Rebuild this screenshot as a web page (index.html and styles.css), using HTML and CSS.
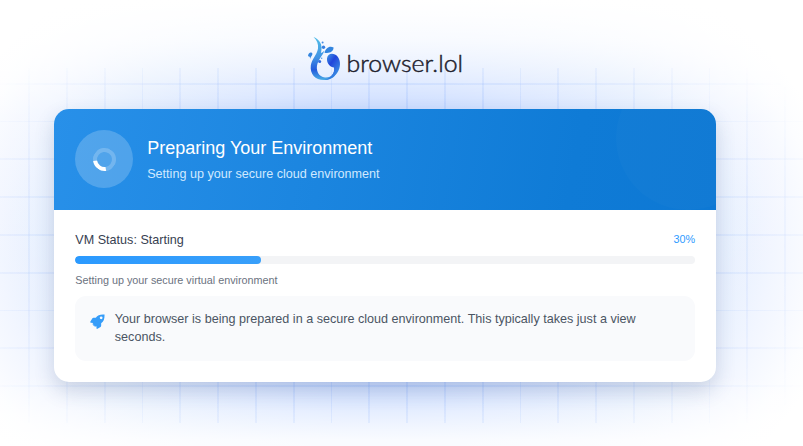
FILE: index.html
```html
<!DOCTYPE html>
<html lang="en">
<head>
<meta charset="utf-8">
<title>browser.lol</title>
<link rel="stylesheet" href="styles.css">
</head>
<body>
<div class="backdrop"></div>
<div class="grid"></div>
<main class="page">
  <svg class="logo" viewBox="0 0 160 48" role="img" aria-label="browser.lol">
    <defs>
      <linearGradient id="water" x1="0" y1="0" x2="0" y2="1">
        <stop offset="0" stop-color="#50bde7"/>
        <stop offset=".48" stop-color="#4293e4"/>
        <stop offset=".76" stop-color="#235bdc"/>
        <stop offset="1" stop-color="#4aaee5"/>
      </linearGradient>
      <linearGradient id="curl" x1="0" y1="0" x2=".8" y2="1">
        <stop offset="0" stop-color="#4aafe6"/>
        <stop offset=".42" stop-color="#2145db"/>
        <stop offset="1" stop-color="#40a1e5"/>
      </linearGradient>
    </defs>
    <path fill="url(#water)" d="M7.500 3C14 5.500 16.500 11 15.300 17c-.6 3 .2 2 3.200-.2-1.500 4-5.500 8-7 12.700-2.200 7 1.300 13.500 7.500 14 6.500.5 10.500-4.500 9.500-11.500 4.500 8-1 14-10.500 14C9 46 3.800 40 4.800 31.500 5.700 25 11 21 12 14.500 12.500 10 11 6 7.500 3Z"/>
    <path fill="url(#curl)" d="M21 24.500c.3-4.300 4.500-5.700 8-3.900 4.800 2.500 6 8.700 4.300 13.900C31 41.500 25.500 45.500 18.500 46c6.200-1.800 10.500-6.500 9.500-12.500-3.500-.2-7.500-4-7-9Z"/>
    <path fill="#3385df" d="M18.500 18.800c1-5.200 5.500-7.600 9.100-5.200-.3 4.400-4.100 6-9.100 5.200Z"/>
    <path fill="#3385df" d="M4.200 25c.2-2.200 2.200-3.600 2.300-5.200C5.300 17.200 2 19 2 22.500c1.300-.6 2 .5 2.200 2.500Z"/>
    <circle cx="16.600" cy="8.500" r="1" fill="#438ce3"/>
    <circle cx="17.500" cy="13.300" r="1.700" fill="#377fe0"/>
    <circle cx="13.700" cy="27.600" r="1.500" fill="#316bdf"/>
    <circle cx="15.700" cy="24.300" r=".7" fill="#4b9de5"/>
    <text class="wordmark" x="40.500" y="37.500" textLength="116.500" lengthAdjust="spacingAndGlyphs">browser.lol</text>
  </svg>
  <section class="card">
    <header class="hero">
      <div class="badge"><div class="spinner"></div></div>
      <div>
        <h1 class="title">Preparing Your Environment</h1>
        <p class="subtitle">Setting up your secure cloud environment</p>
      </div>
    </header>
    <div class="body">
      <div class="status"><span>VM Status: Starting</span><span class="percent">30%</span></div>
      <div class="track"><div class="fill" style="width:30%"></div></div>
      <p class="detail">Setting up your secure virtual environment</p>
      <div class="notice">
        <svg class="rocket" viewBox="0 0 16 16"><path fill-rule="evenodd" d="M15.500.5C11.200.1 8.200 1 6.200 4.100H3.700c-.6 0-1 .2-1.300.7L.3 8.200c-.3.600.1 1 .7 1l2.500.3-1.200 1.500 1.300.2L3.500 12.500l1.300-.1.200 1.300 1.900-.7v2.200c0 .6.600.9 1.100.6l3.200-2c.5-.3.700-.7.700-1.200V9.800c3-2 3.700-5.100 3.600-9.300ZM11.900 2.600a1.500 1.500 0 1 0 0 3 1.500 1.500 0 0 0 0-3Z"/></svg>
        <p class="message">Your browser is being prepared in a secure cloud environment. This typically takes just a view seconds.</p>
      </div>
    </div>
  </section>
</main>
</body>
</html>
```
FILE: styles.css
```css
* { box-sizing: border-box; }
body {
  margin: 0;
  height: 446px;
  overflow: hidden;
  background: #fff;
  font-family: "Liberation Sans", Arial, sans-serif;
}
h1, p { margin: 0; font-weight: 400; }
.backdrop {
  position: absolute;
  inset: 0;
  background:
    linear-gradient(180deg, #fff 0, rgba(255, 255, 255, .8) 40px, rgba(255, 255, 255, .08) 115px, rgba(255, 255, 255, 0) 375px, rgba(255, 255, 255, .85) 440px),
    radial-gradient(ellipse 465px 340px at 385px 246px, #a9c7ff 0%, #bdd3ff 35%, #d2e1ff 52%, #e4eefe 71%, #f2f6ff 83%, #fcfdff 94%, #fff 100%);
}
.grid {
  position: absolute;
  inset: 68px 0 23px;
  background:
    repeating-linear-gradient(90deg, rgba(90, 145, 250, .14) 0 1.800px, transparent 1.800px 37.800px) -9.600px 0 / 850px 100%,
    repeating-linear-gradient(180deg, rgba(90, 145, 250, .14) 0 1.800px, transparent 1.800px 37.800px) 0 -23.100px / 100% 400px;
  -webkit-mask-image: radial-gradient(ellipse 500px 270px at 385px 178px, #000 50%, transparent 100%);
  mask-image: radial-gradient(ellipse 500px 270px at 385px 178px, #000 50%, transparent 100%);
}
.page {
  position: relative;
  width: 662px;
  margin-left: 54px;
  padding-top: 34px;
}
.logo { display: block; width: 160px; height: 48px; margin: 0 0 27px 252px; }
.wordmark {
  font-family: Lato, sans-serif;
  font-size: 23.500px;
  font-weight: 300;
  fill: #20202c;
  stroke: #20202c;
  stroke-width: .450px;
}
.card {
  height: 273px;
  border-radius: 15px;
  overflow: hidden;
  background: #fff;
  box-shadow: 0 9px 20px rgba(45, 65, 110, .18);
}
.hero {
  position: relative;
  display: flex;
  align-items: center;
  gap: 14.200px;
  height: 101px;
  padding: 0 21px 1px;
  overflow: hidden;
  color: #fff;
  background: linear-gradient(100deg, #2890e9 0%, #0f7bd6 78%, #0d78d4 100%);
}
.hero::after {
  content: "";
  position: absolute;
  width: 144px;
  height: 144px;
  right: -44px;
  top: -43px;
  border-radius: 50%;
  background: rgba(255, 255, 255, .018);
}
.badge {
  display: grid;
  place-items: center;
  width: 58px;
  height: 58px;
  border-radius: 50%;
  background: rgba(255, 255, 255, .2);
}
.spinner {
  width: 23px;
  height: 23px;
  border: 4px solid rgba(255, 255, 255, .2);
  border-bottom-color: #fff;
  border-radius: 50%;
  transform: rotate(37deg);
}
.title { font-size: 18px; line-height: 25px; }
.subtitle { margin-top: 4px; font-size: 12.600px; line-height: 18px; color: #d0e9ff; }
.body { padding: 21px; }
.status {
  display: flex;
  align-items: center;
  justify-content: space-between;
  height: 18px;
  padding-left: .300px;
  font-size: 12.600px;
  color: #374151;
}
.percent { margin-top: -2px; font-size: 10.800px; color: #2e9aff; }
.track { height: 8px; margin-top: 7px; border-radius: 4px; overflow: hidden; background: #f3f4f6; }
.fill { height: 100%; border-radius: 4px; background: linear-gradient(90deg, #2b9aff, #389ffa); }
.detail { margin-top: 9px; padding-left: .300px; font-size: 10.800px; line-height: 15px; color: #6b7280; }
.notice {
  display: flex;
  gap: 10.300px;
  height: 65px;
  margin-top: 8px;
  padding: 14px 15px;
  border-radius: 11px;
  background: #f9fafc;
}
.rocket { flex: none; width: 15px; height: 15px; margin: 3.500px 0 0 -.500px; fill: #369df9; }
.message { font-size: 12.600px; line-height: 18px; color: #4b5563; }
```
